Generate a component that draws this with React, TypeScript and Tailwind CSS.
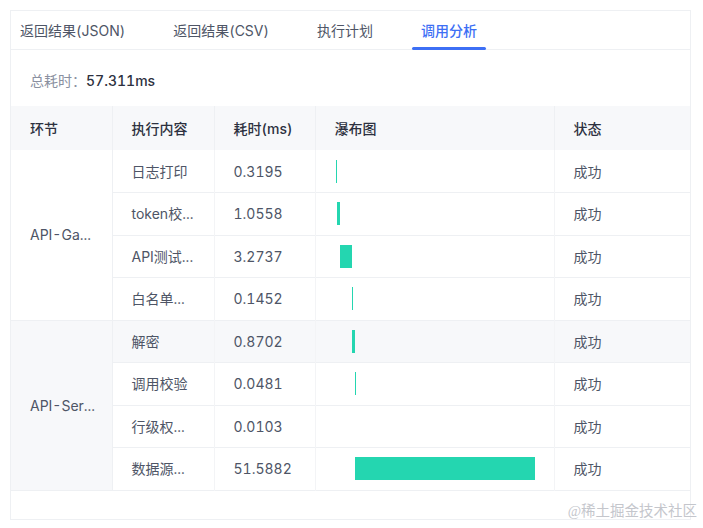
import React from "react";

type Step = {
    name: string;
    cost: number;
};

type Group = {
    label: string;
    steps: Step[];
};

// labels are shortened the same way the table shows them
const groups: Group[] = [
    {
        label: "API-Ga...",
        steps: [
            { name: "日志打印", cost: 0.3195 },
            { name: "token校...", cost: 1.0558 },
            { name: "API测试...", cost: 3.2737 },
            { name: "白名单...", cost: 0.1452 },
        ],
    },
    {
        label: "API-Ser...",
        steps: [
            { name: "解密", cost: 0.8702 },
            { name: "调用校验", cost: 0.0481 },
            { name: "行级权...", cost: 0.0103 },
            { name: "数据源...", cost: 51.5882 },
        ],
    },
];

const TOTAL = 57.311;
const CHART_WIDTH = 200;
const tabs = ["返回结果(JSON)", "返回结果(CSV)", "执行计划", "调用分析"];
const font = { fontFamily: 'Inter, "Noto Sans CJK SC", sans-serif' };

export default function App() {
    let offset = 0;

    return (
        <div className="relative min-h-[528px] bg-white pl-[10px] pt-[10px] tabular-nums" style={font}>
            <div className="flex h-[510px] w-[681px] flex-col border border-[#eef0f3] bg-white">
                {/* Tabs */}
                <div className="flex h-[39px] gap-[30px] border-b border-[#eef0f3]">
                    {tabs.map((t, i) => (
                        <div
                            key={t}
                            className={`relative flex items-center px-[9px] text-[14px] ${i === 3 ? "font-medium text-[#3d6ff5]" : "text-[#4e5566]"}`}
                        >
                            {t}
                            {i === 3 && <div className="absolute -bottom-px left-0 right-0 h-[3px] rounded-full bg-[#3d6ff5]" />}
                        </div>
                    ))}
                </div>

                {/* Summary */}
                <div className="flex h-[56px] items-center pl-[19px] pt-[4px] text-[14px]">
                    <span className="text-[#8a90a0]">总耗时：</span>
                    <span className="font-medium text-[#2d3140]">{TOTAL}ms</span>
                </div>

                {/* Table */}
                <table className="w-full table-fixed border-collapse text-left text-[14px]">
                    <colgroup>
                        <col className="w-[101px]" />
                        <col className="w-[102px]" />
                        <col className="w-[101px]" />
                        <col className="w-[239px]" />
                        <col />
                    </colgroup>
                    <thead>
                        <tr className="h-[44px] bg-[#f7f8fa] text-[#2d3140]">
                            {["环节", "执行内容", "耗时(ms)", "瀑布图", "状态"].map((h, i) => (
                                <th
                                    key={h}
                                    className={`px-[19px] font-medium ${i < 4 ? "border-r border-[#eef0f3]" : ""}`}
                                >
                                    {h}
                                </th>
                            ))}
                        </tr>
                    </thead>
                    <tbody className="text-[#4e5566]">
                        {groups.map((g, gi) =>
                            g.steps.map((s, si) => {
                                const left = (offset / TOTAL) * CHART_WIDTH;
                                const width = (s.cost / TOTAL) * CHART_WIDTH;
                                offset += s.cost;
                                const hovered = gi === 1 && si === 0;
                                return (
                                    <tr
                                        key={s.name}
                                        className={`h-[42.5px] border-b border-[#eef0f3] ${hovered ? "bg-[#f7f8fa]" : ""}`}
                                    >
                                        {si === 0 && (
                                            <td
                                                rowSpan={g.steps.length}
                                                className={`whitespace-nowrap border-r border-[#eef0f3] px-[19px] ${gi === 1 ? "bg-[#f7f8fa]" : ""}`}
                                            >
                                                {g.label}
                                            </td>
                                        )}
                                        <td className="whitespace-nowrap border-r border-[#f3f4f6] px-[19px]">{s.name}</td>
                                        <td className="border-r border-[#f3f4f6] px-[19px]">{s.cost}</td>
                                        <td className="border-r border-[#f3f4f6] px-[20px]">
                                            <div className="flex h-[23px] w-[200px]">
                                                <div
                                                    className="h-full bg-[#24d6b0]"
                                                    style={{ marginLeft: left, width }}
                                                />
                                            </div>
                                        </td>
                                        <td className="px-[19px]">成功</td>
                                    </tr>
                                );
                            })
                        )}
                    </tbody>
                </table>
            </div>

            {/* Watermark */}
            <div
                className="absolute bottom-[5px] right-[6px] text-[14.5px] text-[#c4c6cc]"
                style={{ fontFamily: '"Liberation Serif", "Noto Sans CJK SC", serif' }}
            >
                @稀土掘金技术社区
            </div>
        </div>
    );
}
